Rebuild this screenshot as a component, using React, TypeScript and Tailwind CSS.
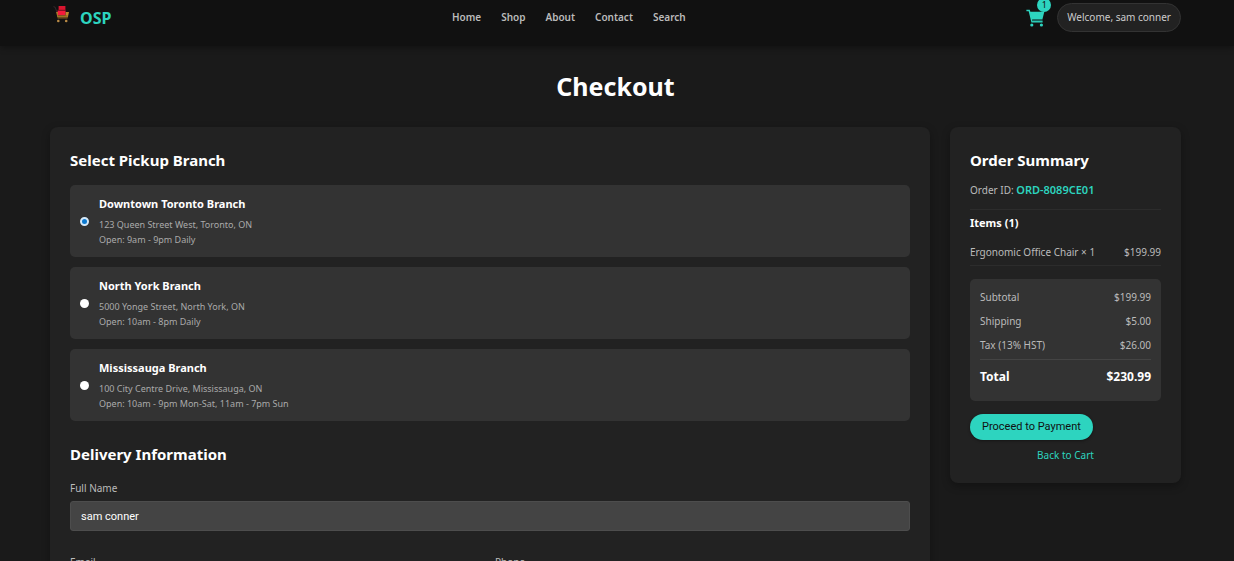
const navLinks = ['Home', 'Shop', 'About', 'Contact', 'Search'];

const branches = [
  {
    id: 'downtown',
    name: 'Downtown Toronto Branch',
    address: '123 Queen Street West, Toronto, ON',
    hours: 'Open: 9am - 9pm Daily',
  },
  {
    id: 'north-york',
    name: 'North York Branch',
    address: '5000 Yonge Street, North York, ON',
    hours: 'Open: 10am - 8pm Daily',
  },
  {
    id: 'mississauga',
    name: 'Mississauga Branch',
    address: '100 City Centre Drive, Mississauga, ON',
    hours: 'Open: 10am - 9pm Mon-Sat, 11am - 7pm Sun',
  },
];

const totals = [
  { label: 'Subtotal', value: '$199.99' },
  { label: 'Shipping', value: '$5.00' },
  { label: 'Tax (13% HST)', value: '$26.00' },
];

function LogoIcon() {
  return (
    <svg className="h-[18px] w-[19px]" viewBox="0 0 19 18" fill="none" aria-hidden="true">
      <path d="M0.5 1.5l1.6 0.8L4.6 8.5" stroke="#33282a" strokeWidth="1.1" />
      <path d="M5.6 1h6.8v4H5.6z" fill="#d8152f" />
      <path d="M4.6 5.4h8v5h-8z" fill="#f51a3c" />
      <path d="M4.6 5.2h8.4" stroke="#7c0f1e" strokeWidth="0.7" />
      <path d="M3.2 7h1.6v3.4h7.8V7h3.4l-1.2 5.4H4.4z" fill="#c08a2e" />
      <path d="M4.5 11h10" stroke="#7a521b" strokeWidth="0.9" />
      <path d="M4.6 13.6h10" stroke="#5b3c17" strokeWidth="0.9" />
      <circle cx="5.3" cy="16" r="1.3" fill="#b98a45" />
      <circle cx="13.2" cy="16" r="1.3" fill="#b98a45" />
    </svg>
  );
}

function CartIcon() {
  return (
    <svg className="h-[18px] w-[19px]" viewBox="0 0 19 18" fill="none" aria-hidden="true">
      <path d="M0.4 1.4H3.2L6 12.8H16.6" stroke="#2dd4bf" strokeWidth="1.5" />
      <path d="M3.6 2.8H18.3L16.4 10.4H5.5z" fill="#2dd4bf" />
      <path d="M6 11.4h10.6" stroke="#17685f" strokeWidth="1.4" />
      <circle cx="5.8" cy="16" r="1.6" fill="#2dd4bf" />
      <circle cx="15.4" cy="16" r="1.6" fill="#2dd4bf" />
    </svg>
  );
}

function Header() {
  return (
    <header className="bg-[#111] pt-[3px] pr-[53px] pb-[14px] pl-[50px] shadow-[0_2px_6px_rgba(0,0,0,0.3)]">
      <div className="flex items-center justify-between">
        <a href="#" className="flex items-center gap-2 pl-[3px] text-base font-bold text-[#2dd4bf]">
          <span className="pb-2">
            <LogoIcon />
          </span>
          OSP
        </a>
        <nav className="flex gap-5 text-[10px] font-semibold text-[#bbb]">
          {navLinks.map((link) => (
            <a key={link} href="#">
              {link}
            </a>
          ))}
        </nav>
        <div className="flex items-center gap-3">
          <a href="#" aria-label="Cart" className="relative">
            <CartIcon />
            <span className="absolute -top-[11px] -right-[6px] flex size-[14px] items-center justify-center rounded-full bg-[#2dd4bf] text-[9px] text-[#111]">
              1
            </span>
          </a>
          <span className="flex h-[29px] items-center rounded-full border border-[#333] bg-[#222] px-[9px] text-[10px] text-[#ccc]">
            Welcome, sam conner
          </span>
        </div>
      </div>
    </header>
  );
}

function BranchOption({ branch, checked }: { branch: (typeof branches)[number]; checked: boolean }) {
  return (
    <label className="flex items-center gap-[10px] rounded-[5px] bg-[#333] px-[10px] py-[10px]">
      <input
        type="radio"
        name="branch"
        value={branch.id}
        defaultChecked={checked}
        className="size-[9px] shrink-0 appearance-none rounded-full bg-white checked:border-2 checked:border-[#d5e9fa] checked:bg-[#0b79d0]"
      />
      <span className="block">
        <span className="block text-[11px] leading-[18px] font-bold text-white">{branch.name}</span>
        <span className="mt-1 block text-[9px] leading-[15px] text-[#aaa]">{branch.address}</span>
        <span className="block text-[9px] leading-[15px] text-[#aaa]">{branch.hours}</span>
      </span>
    </label>
  );
}

interface FieldProps {
  id: string;
  label: string;
  type?: string;
  value?: string;
}

function Field({ id, label, type = 'text', value }: FieldProps) {
  return (
    <div>
      <label htmlFor={id} className="mb-[5px] block text-[10px] leading-4 text-[#bbb]">
        {label}
      </label>
      <input
        id={id}
        type={type}
        defaultValue={value}
        className="block h-[30px] w-full rounded-[3px] border border-[#4d4d4d] bg-[#444] px-[10px] font-[Roboto,sans-serif] text-[11px] text-white"
      />
    </div>
  );
}

function OrderSummary() {
  return (
    <aside className="rounded-[8px] bg-[#222] p-5 shadow-[0_3px_8px_rgba(0,0,0,0.3)]">
      <h2 className="text-[15px] leading-[26px] font-bold text-white">Order Summary</h2>
      <p className="mt-[9px] border-b border-[#2c2c2c] pb-[11px] text-[10px] leading-4 text-[#bbb]">
        Order ID: <strong className="text-[11px] font-semibold text-[#2dd4bf]">ORD-8089CE01</strong>
      </p>
      <h3 className="mt-[3px] text-[11px] leading-5 font-bold text-white">Items (1)</h3>
      <div className="mt-[11px] flex justify-between border-b border-[#2c2c2c] pb-[5px] text-[10px] leading-4 text-[#bbb]">
        <span>Ergonomic Office Chair × 1</span>
        <span>$199.99</span>
      </div>
      <dl className="mt-[13px] rounded-[5px] bg-[#333] px-[10px] pt-[10px] pb-[14px] text-[10px] text-[#bbb]">
        {totals.map((row) => (
          <div key={row.label} className="mb-2 flex justify-between leading-4">
            <dt>{row.label}</dt>
            <dd>{row.value}</dd>
          </div>
        ))}
        <div className="-mt-[2px] flex justify-between border-t border-[#444] pt-[7px] text-xs leading-5 font-bold text-white">
          <dt>Total</dt>
          <dd>$230.99</dd>
        </div>
      </dl>
      <button
        type="button"
        className="mt-[13px] block h-[26px] rounded-full bg-[#2dd4bf] px-3 font-[Roboto,sans-serif] text-[11px] text-[#111] shadow-[0_1px_3px_rgba(0,0,0,0.4)]"
      >
        Proceed to Payment
      </button>
      <a href="#" className="mt-[7px] block text-center text-[10px] leading-4 text-[#2dd4bf]">
        Back to Cart
      </a>
    </aside>
  );
}

export default function App() {
  return (
    <div className="min-h-screen bg-[#1a1a1a] font-['Noto_Sans',sans-serif]">
      <Header />
      <main className="pr-[53px] pb-10 pl-[50px]">
        <h1 className="pt-5 pb-[21px] text-center text-[25px] leading-10 font-bold text-white">Checkout</h1>
        <div className="grid grid-cols-[1fr_231px] items-start gap-5">
          <form className="rounded-[8px] bg-[#222] p-5 shadow-[0_3px_8px_rgba(0,0,0,0.3)]">
            <h2 className="text-[15px] leading-[26px] font-bold text-white">Select Pickup Branch</h2>
            <div className="mt-3 flex flex-col gap-[10px]">
              {branches.map((branch, i) => (
                <BranchOption key={branch.id} branch={branch} checked={i === 0} />
              ))}
            </div>
            <h2 className="mt-5 mb-[13px] text-[15px] leading-[26px] font-bold text-white">Delivery Information</h2>
            <Field id="name" label="Full Name" value="sam conner" />
            <div className="mt-[23px] grid grid-cols-2 gap-[10px]">
              <Field id="email" label="Email" type="email" />
              <Field id="phone" label="Phone" type="tel" />
            </div>
          </form>
          <OrderSummary />
        </div>
      </main>
    </div>
  );
}
